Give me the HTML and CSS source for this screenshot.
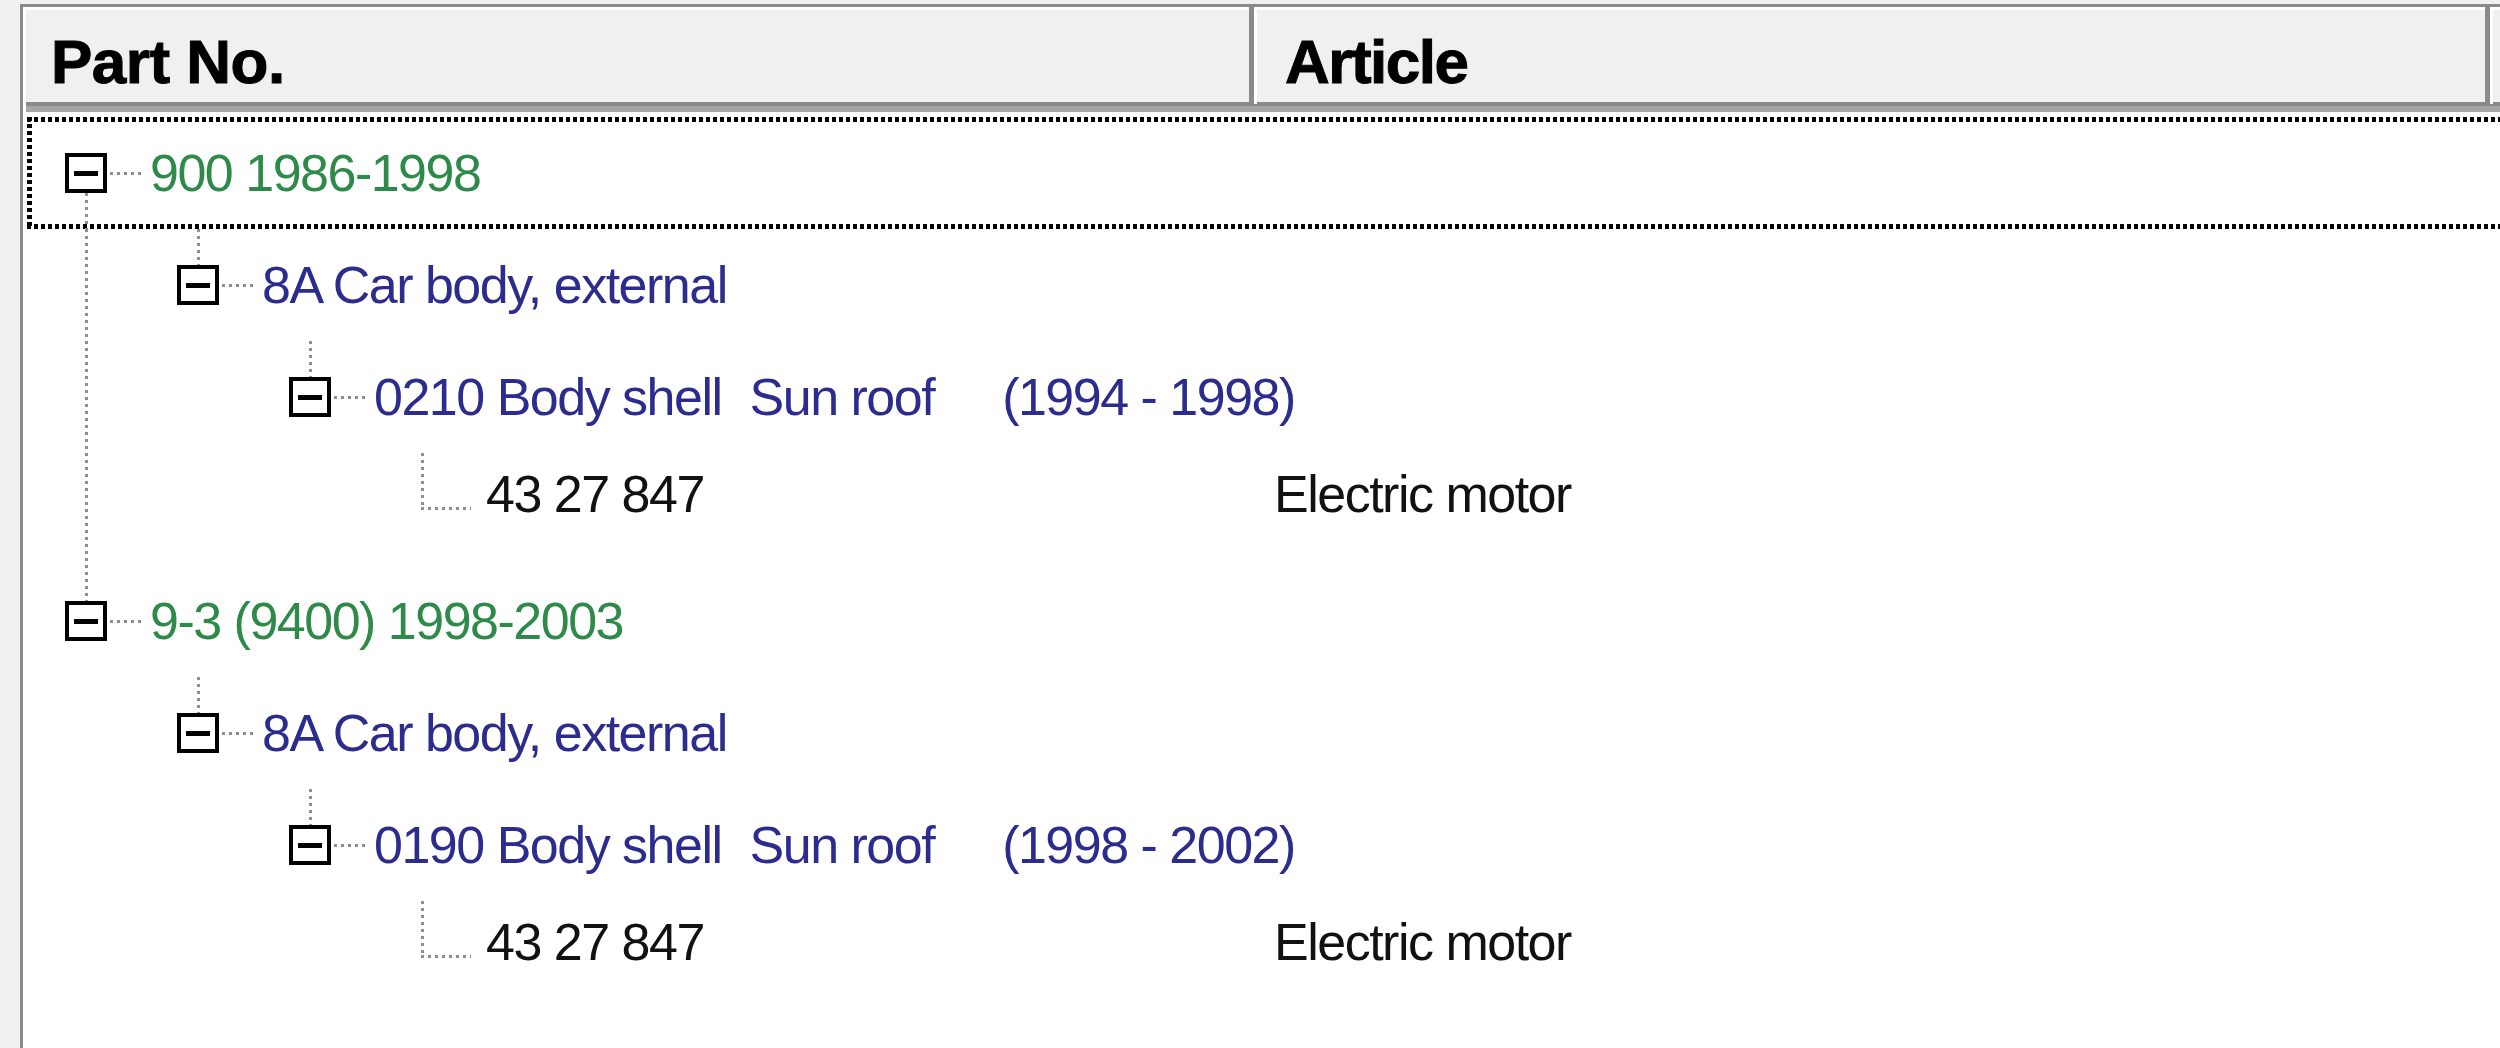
FILE: index.html
```html
<!DOCTYPE html>
<html>
<head>
<meta charset="utf-8">
<title>Parts tree</title>
<link rel="stylesheet" href="styles.css">
</head>
<body>
<div class="frame">
  <div class="header">
    <div class="hcol hcol1">Part No.</div>
    <div class="hdiv"></div>
    <div class="hcol hcol2">Article</div>
    <div class="hdiv"></div>
    <div class="hrest"></div>
  </div>
  <div class="tree">
    <div class="row focus">
      <div class="cell">
        <div class="slot exp-below"><span class="box"></span></div>
        <span class="label green">900 1986-1998</span>
      </div>
      <div class="article"></div>
    </div>
    <div class="row">
      <div class="cell">
        <div class="slot pass"></div>
        <div class="slot exp-above"><span class="box"></span></div>
        <span class="label blue">8A Car body, external</span>
      </div>
      <div class="article"></div>
    </div>
    <div class="row">
      <div class="cell">
        <div class="slot pass"></div>
        <div class="slot"></div>
        <div class="slot exp-above"><span class="box"></span></div>
        <span class="label blue"><span>0210 Body shell</span><span class="gap1">Sun roof</span><span class="gap2">(1994 - 1998)</span></span>
      </div>
      <div class="article"></div>
    </div>
    <div class="row">
      <div class="cell">
        <div class="slot pass"></div>
        <div class="slot"></div>
        <div class="slot"></div>
        <div class="slot leaf"></div>
        <span class="label black raised">43 27 847</span>
      </div>
      <div class="article"><span class="label black raised">Electric motor</span></div>
    </div>
    <div class="row">
      <div class="cell">
        <div class="slot exp-above"><span class="box"></span></div>
        <span class="label green">9-3 (9400) 1998-2003</span>
      </div>
      <div class="article"></div>
    </div>
    <div class="row">
      <div class="cell">
        <div class="slot"></div>
        <div class="slot exp-above"><span class="box"></span></div>
        <span class="label blue">8A Car body, external</span>
      </div>
      <div class="article"></div>
    </div>
    <div class="row">
      <div class="cell">
        <div class="slot"></div>
        <div class="slot"></div>
        <div class="slot exp-above"><span class="box"></span></div>
        <span class="label blue"><span>0190 Body shell</span><span class="gap1">Sun roof</span><span class="gap2">(1998 - 2002)</span></span>
      </div>
      <div class="article"></div>
    </div>
    <div class="row">
      <div class="cell">
        <div class="slot"></div>
        <div class="slot"></div>
        <div class="slot"></div>
        <div class="slot leaf"></div>
        <span class="label black raised">43 27 847</span>
      </div>
      <div class="article"><span class="label black raised">Electric motor</span></div>
    </div>
  </div>
</div>
</body>
</html>
```

FILE: styles.css
```css
:root {
  --vd: repeating-linear-gradient(to bottom, #8f8f8f 0 3px, transparent 3px 7px);
  --hd: repeating-linear-gradient(to right, #8f8f8f 0 3px, transparent 3px 7px);
  --fv: repeating-linear-gradient(to bottom, #000 0 4px, transparent 4px 7px);
  --fh: repeating-linear-gradient(to right, #000 0 4px, transparent 4px 7px);
}

html, body {
  margin: 0;
  padding: 0;
  height: 100%;
  overflow: hidden;
}

body {
  background: #f0f0f0;
  font-family: "Liberation Sans", Arial, sans-serif;
}

.frame {
  margin: 4px 0 0 20px;
  height: calc(100vh - 4px);
  border-left: 3px solid #8a8a8a;
  border-top: 3px solid #8a8a8a;
  background: #fff;
  box-sizing: border-box;
}

.header {
  display: flex;
  height: 105px;
  box-shadow: inset 3px 3px 0 #fff;
  background-color: #f0f0f0;
  background-image: linear-gradient(to bottom, #f0f0f0 0 95px, #8a8a8a 95px 99px, #a6a6a6 99px 105px);
}

.hcol {
  font-size: 62px;
  font-weight: bold;
  letter-spacing: -0.5px;
  color: #000;
  padding-top: 19px;
  box-sizing: border-box;
  white-space: nowrap;
  -webkit-text-stroke: 1px #000;
}

.hcol1 {
  width: 1226px;
  padding-left: 28px;
}

.hcol2 {
  width: 1228px;
  padding-left: 28px;
  letter-spacing: -1.5px;
}

.hdiv {
  width: 8px;
  height: 97px;
  flex: none;
  background: linear-gradient(to right, #8a8a8a 0 5px, #fff 5px 8px);
}

.hrest {
  flex: 1;
}

.tree {
  padding: 5px 0 0 4px;
}

.row {
  display: grid;
  grid-template-columns: 1247px 1fr;
  height: 112px;
}

.row.focus {
  background-image: var(--fh), var(--fh), var(--fv);
  background-size: 100% 5px, 100% 5px, 5px 100%;
  background-position: left top, left bottom, left top;
  background-repeat: no-repeat;
}

.cell {
  display: flex;
  align-items: center;
  padding-left: 3px;
  height: 112px;
}

.article {
  display: flex;
  align-items: center;
  height: 112px;
}

.slot {
  width: 112px;
  height: 112px;
  flex: none;
  display: flex;
  align-items: center;
  padding-left: 35px;
  box-sizing: border-box;
  background-repeat: no-repeat;
}

.slot.pass {
  background-image: var(--vd);
  background-size: 3px 100%;
  background-position: 55px top;
}

.slot.exp-below {
  background-image: var(--hd), var(--vd);
  background-size: 32px 3px, 3px 36px;
  background-position: right 55px, 55px bottom;
}

.slot.exp-above {
  background-image: var(--hd), var(--vd);
  background-size: 32px 3px, 3px 36px;
  background-position: right 55px, 55px top;
}

.slot.leaf {
  background-image: var(--vd), var(--hd);
  background-size: 3px 57px, 50px 3px;
  background-position: 55px top, 55px 54px;
}

.box {
  width: 42px;
  height: 40px;
  box-sizing: border-box;
  border: 4px solid #000;
  background: #fff;
  display: flex;
  align-items: center;
  justify-content: center;
}

.box::before {
  content: "";
  width: 24px;
  height: 5px;
  background: #000;
}

.label {
  font-size: 52px;
  letter-spacing: -1.5px;
  white-space: nowrap;
  margin-left: 8px;
}

.article .label {
  margin-left: 0;
}

.label.raised {
  margin-bottom: 30px;
}

.green { color: #2e8a48; }
.blue { color: #2c2c8e; }
.black { color: #111; }

.gap1 { margin-left: 28px; }
.gap2 { margin-left: 68px; }
```
